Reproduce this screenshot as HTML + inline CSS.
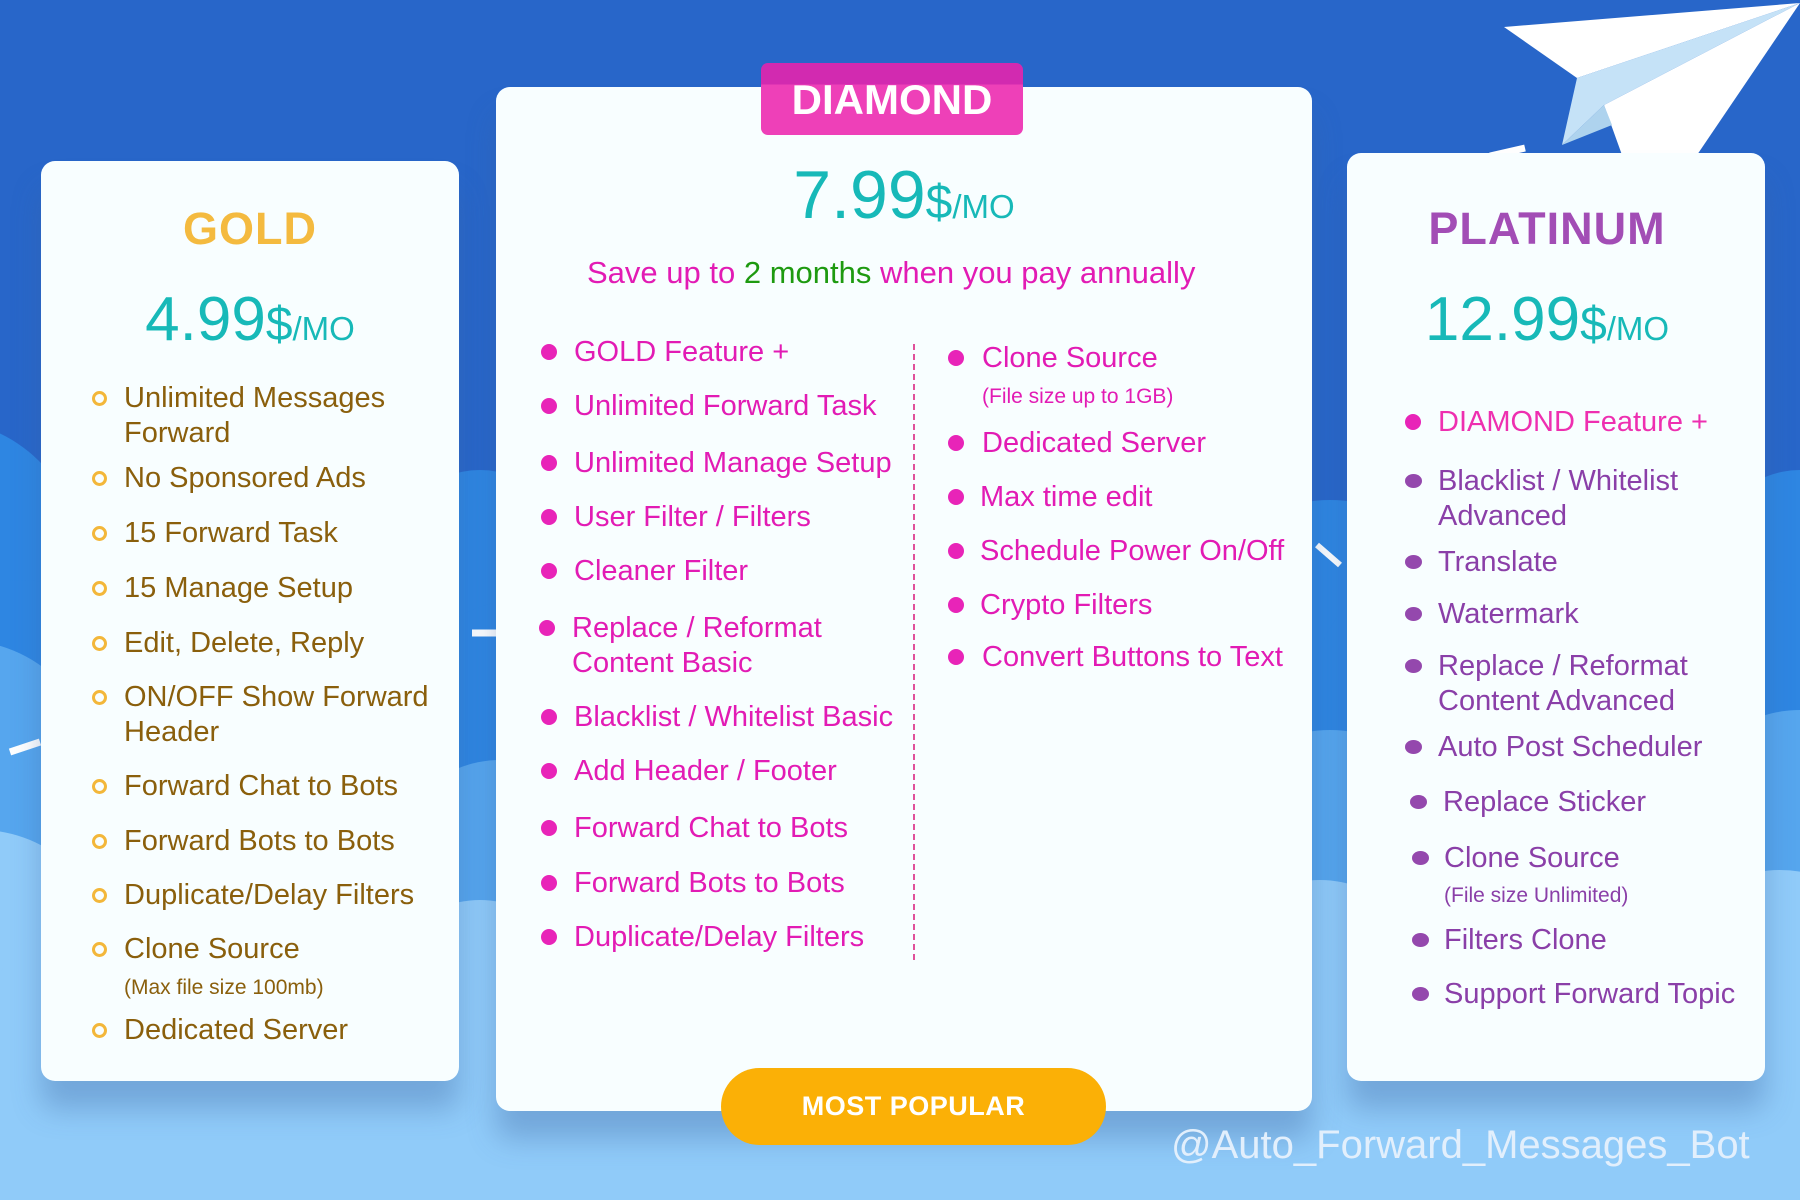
<!DOCTYPE html>
<html><head><meta charset="utf-8"><style>
*{margin:0;padding:0;box-sizing:border-box}
body{width:1800px;height:1200px;overflow:hidden;position:relative;background:#2866c9;font-family:"Liberation Sans",sans-serif}
.card{position:absolute;background:#f8feff;border-radius:14px;box-shadow:0 28px 28px rgba(60,100,160,.35)}
.t{position:absolute;white-space:nowrap;line-height:35px;font-size:29px}
.g{color:#8a5f0c}.d{color:#e21bb4}.p{color:#8a3fa8}
.s{font-size:21px}
.b{position:absolute;border-radius:50%}
.bg{width:15px;height:15px;border:3px solid #f3b73a}
.bd{width:16px;height:16px;background:#e824b8}
.bp{width:17px;height:14px;background:#9448ad}
.title{position:absolute;font-weight:bold;font-size:45px;text-align:center;letter-spacing:1px}
.price{position:absolute;color:#17b9b8;text-align:center;white-space:nowrap}
.price .n{font-size:62px}.price .dl{font-size:48px}.price .mo{font-size:33px}
</style></head><body>
<svg width="1800" height="1200" style="position:absolute;left:0;top:0">
<g fill="#2e86e2">
<circle cx="-60" cy="560" r="140"/><circle cx="20" cy="700" r="120"/><circle cx="480" cy="560" r="90"/><circle cx="520" cy="720" r="120"/>
<circle cx="1330" cy="640" r="140"/><circle cx="1450" cy="700" r="140"/><circle cx="1800" cy="560" r="90"/><circle cx="1760" cy="700" r="120"/>
<rect x="0" y="700" width="1800" height="500"/>
</g>
<g fill="#56a6ee">
<circle cx="-40" cy="780" r="140"/><circle cx="60" cy="880" r="120"/><circle cx="500" cy="870" r="110"/><circle cx="1330" cy="860" r="130"/><circle cx="1800" cy="830" r="120"/><circle cx="1740" cy="920" r="110"/>
<rect x="0" y="900" width="1800" height="300"/>
</g>
<g fill="#90cbf9">
<circle cx="-20" cy="960" r="130"/><circle cx="100" cy="1020" r="110"/><circle cx="480" cy="1000" r="100"/><circle cx="1320" cy="990" r="110"/><circle cx="1780" cy="990" r="120"/>
<rect x="0" y="1030" width="1800" height="170"/>
</g>
<polygon points="1504,27 1800,3 1577,78" fill="#fff"/>
<polygon points="1604,105 1800,3 1697,155 1622,155" fill="#fff"/>
<polygon points="1577,78 1800,3 1604,105 1562,145" fill="#c5e2f7"/>
<polygon points="1604,105 1612,125 1562,145" fill="#aed3ee"/>
<line x1="1525" y1="148" x2="1490" y2="156" stroke="#fff" stroke-width="7"/>
<line x1="472" y1="633" x2="500" y2="633" stroke="#fff" stroke-width="7"/>
<line x1="10" y1="752" x2="40" y2="742" stroke="#fff" stroke-width="7"/>
<line x1="1317" y1="545" x2="1340" y2="565" stroke="#fff" stroke-width="6"/>
</svg>

<!-- GOLD -->
<div class="card" style="left:41px;top:161px;width:418px;height:920px"></div>
<div class="title" style="left:41px;width:418px;top:203px;color:#f4ba3f">GOLD</div>
<div class="price" style="left:41px;width:418px;top:284px"><span class="n">4.99</span><span class="dl">$</span><span class="mo">/MO</span></div>
<div class="b bg" style="left:92px;top:391px"></div><div class="t g" style="left:124px;top:381px">Unlimited Messages<br>Forward</div>
<div class="b bg" style="left:92px;top:471px"></div><div class="t g" style="left:124px;top:461px">No Sponsored Ads</div>
<div class="b bg" style="left:92px;top:526px"></div><div class="t g" style="left:124px;top:516px">15 Forward Task</div>
<div class="b bg" style="left:92px;top:581px"></div><div class="t g" style="left:124px;top:571px">15 Manage Setup</div>
<div class="b bg" style="left:92px;top:636px"></div><div class="t g" style="left:124px;top:626px">Edit, Delete, Reply</div>
<div class="b bg" style="left:92px;top:690px"></div><div class="t g" style="left:124px;top:680px">ON/OFF Show Forward<br>Header</div>
<div class="b bg" style="left:92px;top:779px"></div><div class="t g" style="left:124px;top:769px">Forward Chat to Bots</div>
<div class="b bg" style="left:92px;top:834px"></div><div class="t g" style="left:124px;top:824px">Forward Bots to Bots</div>
<div class="b bg" style="left:92px;top:888px"></div><div class="t g" style="left:124px;top:878px">Duplicate/Delay Filters</div>
<div class="b bg" style="left:92px;top:942px"></div><div class="t g" style="left:124px;top:932px">Clone Source</div>
<div class="t g s" style="left:124px;top:970px">(Max file size 100mb)</div>
<div class="b bg" style="left:92px;top:1023px"></div><div class="t g" style="left:124px;top:1013px">Dedicated Server</div>

<!-- DIAMOND -->
<div class="card" style="left:496px;top:87px;width:816px;height:1024px"></div>
<div style="position:absolute;left:761px;top:63px;width:262px;height:72px;border-radius:7px;background:linear-gradient(#d22ab0 0,#d22ab0 30%,#ee40b8 30%);color:#fff;font-weight:bold;font-size:42px;text-align:center;line-height:74px">DIAMOND</div>
<div class="price" style="left:496px;width:816px;top:156px"><span class="n" style="font-size:68px">7.99</span><span class="dl">$</span><span class="mo">/MO</span></div>
<div class="t" style="left:587px;top:255px;font-size:31px;color:#e21bb4">Save up to <span style="color:#1e9a10">2 months</span> when you pay annually</div>
<div style="position:absolute;left:913px;top:344px;height:616px;border-left:2px dashed #e0509a"></div>
<div class="b bd" style="left:541px;top:344px"></div><div class="t d" style="left:574px;top:335px">GOLD Feature +</div>
<div class="b bd" style="left:541px;top:398px"></div><div class="t d" style="left:574px;top:389px">Unlimited Forward Task</div>
<div class="b bd" style="left:541px;top:455px"></div><div class="t d" style="left:574px;top:446px">Unlimited Manage Setup</div>
<div class="b bd" style="left:541px;top:509px"></div><div class="t d" style="left:574px;top:500px">User Filter / Filters</div>
<div class="b bd" style="left:541px;top:563px"></div><div class="t d" style="left:574px;top:554px">Cleaner Filter</div>
<div class="b bd" style="left:539px;top:620px"></div><div class="t d" style="left:572px;top:611px">Replace / Reformat<br>Content Basic</div>
<div class="b bd" style="left:541px;top:709px"></div><div class="t d" style="left:574px;top:700px">Blacklist / Whitelist Basic</div>
<div class="b bd" style="left:541px;top:763px"></div><div class="t d" style="left:574px;top:754px">Add Header / Footer</div>
<div class="b bd" style="left:541px;top:820px"></div><div class="t d" style="left:574px;top:811px">Forward Chat to Bots</div>
<div class="b bd" style="left:541px;top:875px"></div><div class="t d" style="left:574px;top:866px">Forward Bots to Bots</div>
<div class="b bd" style="left:541px;top:929px"></div><div class="t d" style="left:574px;top:920px">Duplicate/Delay Filters</div>
<div class="b bd" style="left:948px;top:350px"></div><div class="t d" style="left:982px;top:341px">Clone Source</div>
<div class="t d s" style="left:982px;top:379px">(File size up to 1GB)</div>
<div class="b bd" style="left:948px;top:435px"></div><div class="t d" style="left:982px;top:426px">Dedicated Server</div>
<div class="b bd" style="left:948px;top:489px"></div><div class="t d" style="left:980px;top:480px">Max time edit</div>
<div class="b bd" style="left:948px;top:543px"></div><div class="t d" style="left:980px;top:534px">Schedule Power On/Off</div>
<div class="b bd" style="left:948px;top:597px"></div><div class="t d" style="left:980px;top:588px">Crypto Filters</div>
<div class="b bd" style="left:948px;top:649px"></div><div class="t d" style="left:982px;top:640px">Convert Buttons to Text</div>
<div style="position:absolute;left:721px;top:1068px;width:385px;height:77px;border-radius:39px;background:#fbb006;color:#fff;font-weight:bold;font-size:27px;text-align:center;line-height:77px;letter-spacing:.5px">MOST POPULAR</div>

<!-- PLATINUM -->
<div class="card" style="left:1347px;top:153px;width:418px;height:928px"></div>
<div class="title" style="left:1347px;width:400px;top:203px;color:#a24db5">PLATINUM</div>
<div class="price" style="left:1347px;width:400px;top:284px"><span class="n">12.99</span><span class="dl">$</span><span class="mo">/MO</span></div>
<div class="b bd" style="left:1405px;top:414px"></div><div class="t d" style="left:1438px;top:405px;color:#ee2fb0">DIAMOND Feature +</div>
<div class="b bp" style="left:1405px;top:474px"></div><div class="t p" style="left:1438px;top:464px">Blacklist / Whitelist<br>Advanced</div>
<div class="b bp" style="left:1405px;top:555px"></div><div class="t p" style="left:1438px;top:545px">Translate</div>
<div class="b bp" style="left:1405px;top:607px"></div><div class="t p" style="left:1438px;top:597px">Watermark</div>
<div class="b bp" style="left:1405px;top:659px"></div><div class="t p" style="left:1438px;top:649px">Replace / Reformat<br>Content Advanced</div>
<div class="b bp" style="left:1405px;top:740px"></div><div class="t p" style="left:1438px;top:730px">Auto Post Scheduler</div>
<div class="b bp" style="left:1410px;top:795px"></div><div class="t p" style="left:1443px;top:785px">Replace Sticker</div>
<div class="b bp" style="left:1412px;top:851px"></div><div class="t p" style="left:1444px;top:841px">Clone Source</div>
<div class="t p s" style="left:1444px;top:878px">(File size Unlimited)</div>
<div class="b bp" style="left:1412px;top:933px"></div><div class="t p" style="left:1444px;top:923px">Filters Clone</div>
<div class="b bp" style="left:1412px;top:987px"></div><div class="t p" style="left:1444px;top:977px">Support Forward Topic</div>

<div class="t" style="left:1171px;top:1120px;font-size:40px;line-height:50px;color:#e2effc">@Auto_Forward_Messages_Bot</div>
</body></html>
